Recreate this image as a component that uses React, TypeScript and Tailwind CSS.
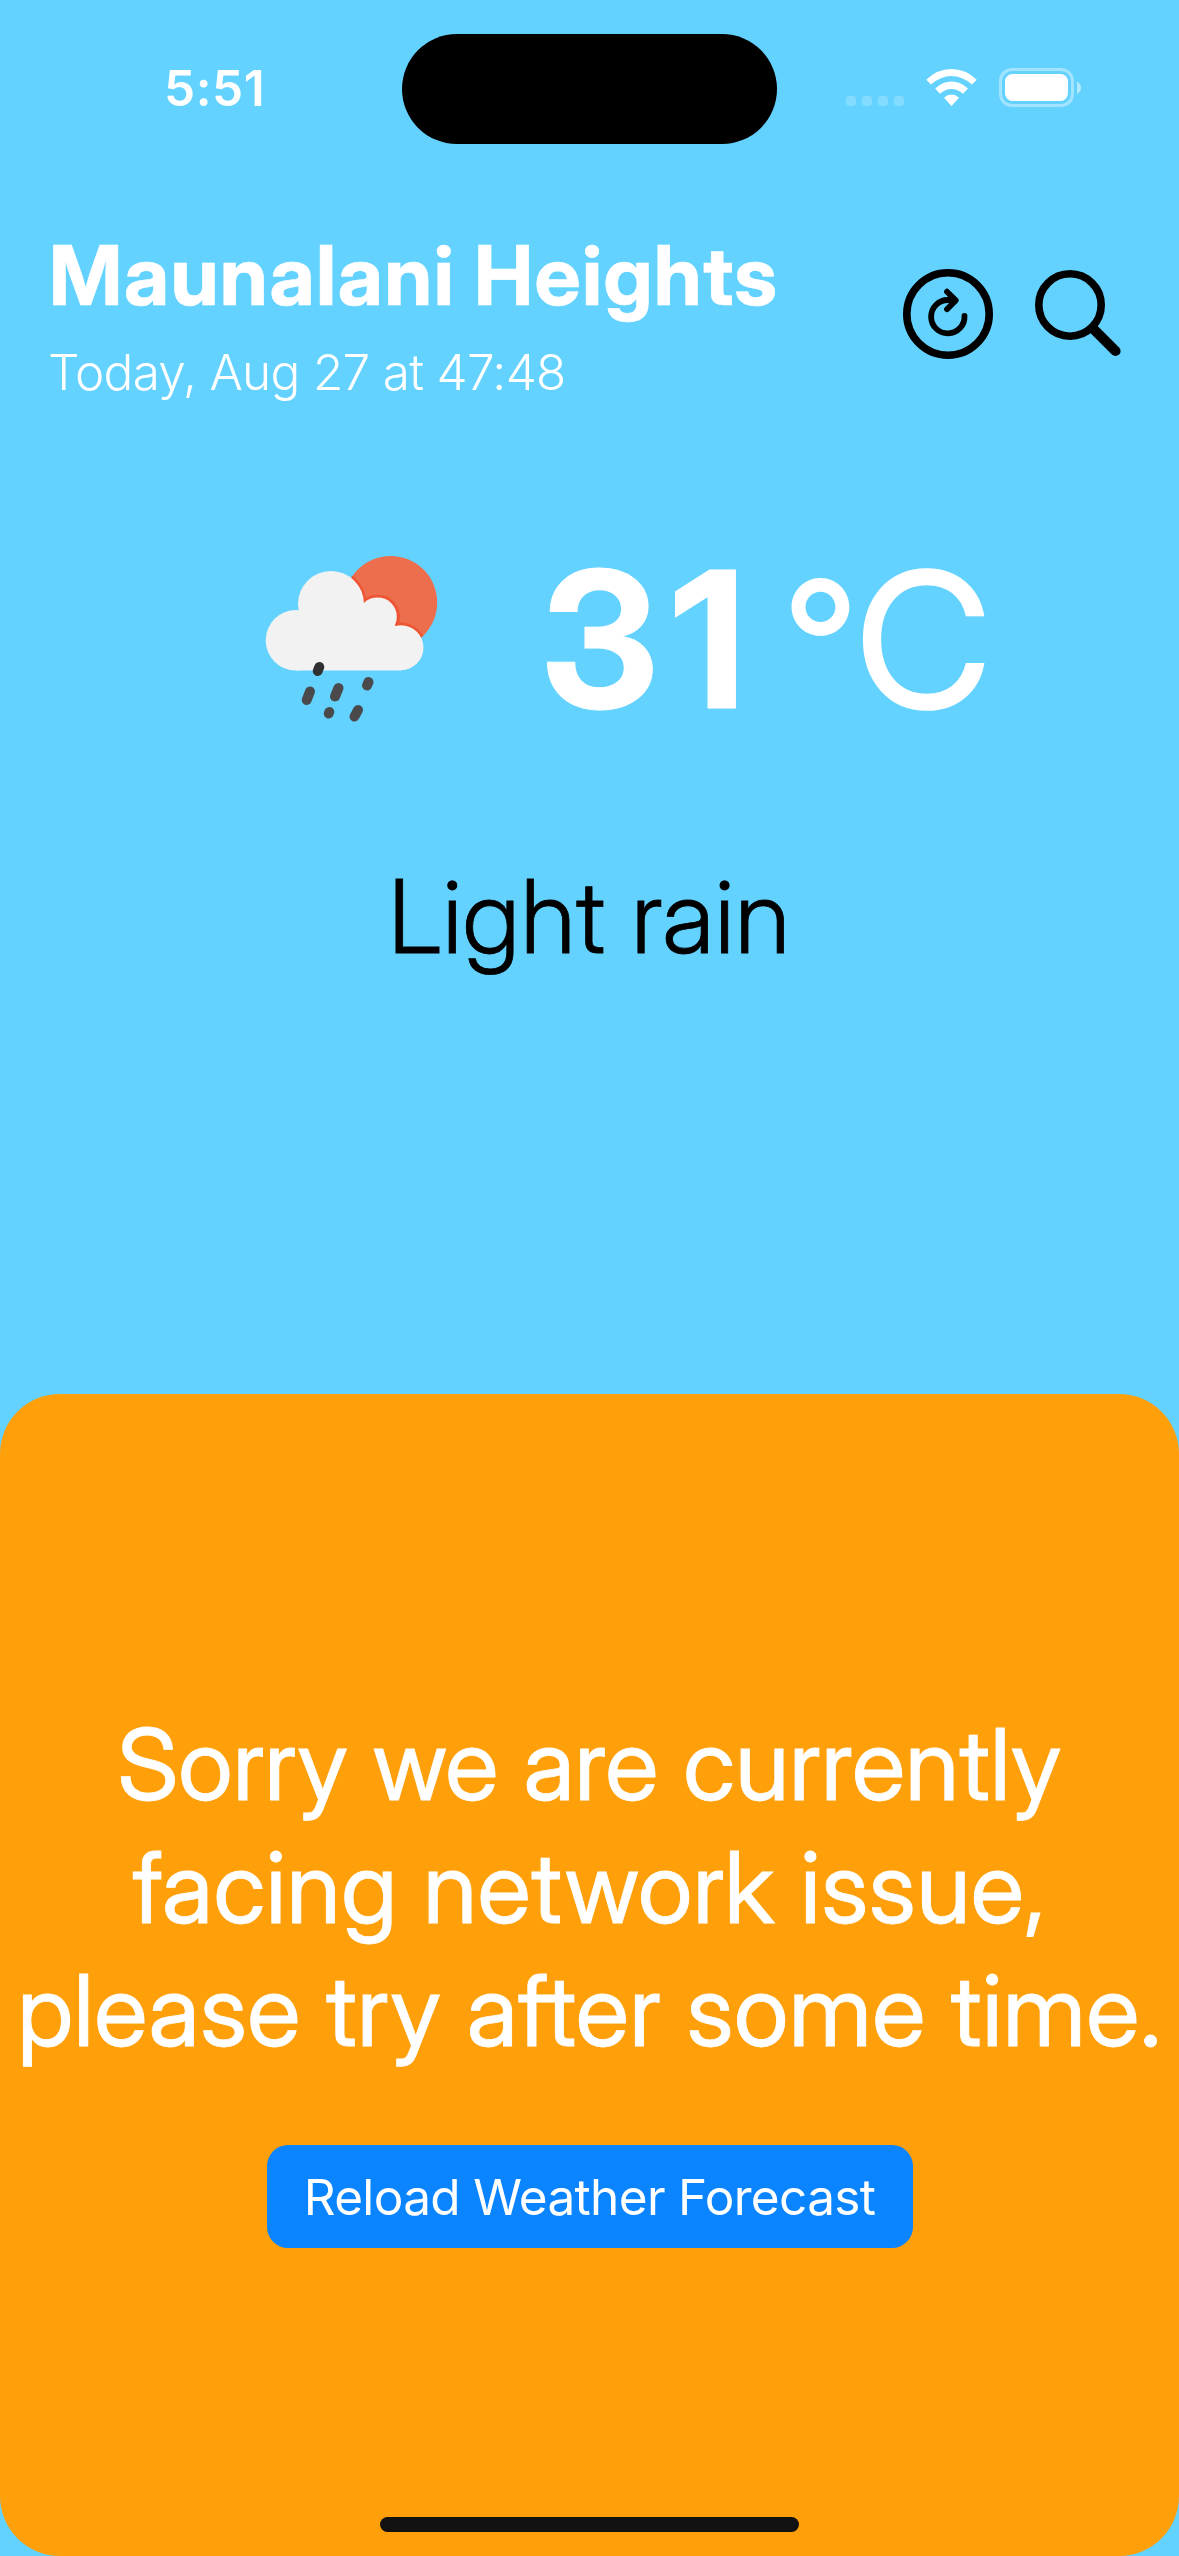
function StatusBar() {
  return (
    <div className="flex h-[178px] items-start justify-between">
      <div className="w-[402px] pl-[164px] pt-[58px] text-[49.5px] leading-[60px] font-semibold tracking-[0.6px] text-white">5:51</div>
      <div className="mt-[33.5px] h-[110.5px] w-[375px] rounded-full bg-black" />
      <div className="flex w-[402px] pl-[69px] pt-[64px]">
        <svg width="245" height="48" viewBox="846 64 245 48" fill="#fff">
          <g opacity="0.2">
            <rect x="846" y="96" width="10" height="10" rx="3" />
            <rect x="862" y="96" width="10" height="10" rx="3" />
            <rect x="878" y="96" width="10" height="10" rx="3" />
            <rect x="894" y="96" width="10" height="10" rx="3" />
          </g>
          <path d="M926.3 79.8 Q937.2 69 951.5 69 T976.7 79.8 L972 84.6 Q962.5 76 951.5 76 T931 84.6 Z" />
          <path d="M935.2 88.6 Q942.5 81.6 951.5 81.6 T968 88.6 L963 93.8 Q957.8 89 951.5 89 T940 93.8 Z" />
          <path d="M944 97.7 Q947.3 94.5 951.5 94.5 T959 97.7 L951.5 106 Z" />
          <rect x="1000.5" y="69.5" width="72" height="36" rx="11.5" fill="none" stroke="#fff" strokeWidth="3" opacity="0.4" />
          <rect x="1005" y="74" width="63" height="27" rx="7.5" />
          <path d="M1077 81.5 Q1081 83.5 1081 87.7 T1077 94 Z" opacity="0.5" />
        </svg>
      </div>
    </div>
  );
}

function RefreshIcon() {
  return (
    <svg width="90" height="90" viewBox="0 0 90 90" fill="none" stroke="#000" strokeLinecap="round" strokeLinejoin="round">
      <circle cx="45" cy="45" r="41.2" strokeWidth="7.6" />
      <path d="M61.5 47 A16.7 16.7 0 1 1 44.8 31 L51 31" strokeWidth="5.8" />
      <path d="M44 22.7 L52.7 31.4 L44 40.2" strokeWidth="5.8" />
    </svg>
  );
}

function SearchIcon() {
  return (
    <svg width="86" height="88" viewBox="0 0 86 88" fill="none" stroke="#000" strokeLinecap="round">
      <circle cx="35" cy="36" r="31.2" strokeWidth="7.6" />
      <path d="M59 60.5 L80.5 82" strokeWidth="10.2" />
    </svg>
  );
}

function RainIcon() {
  return (
    <svg width="180" height="180" viewBox="260 550 180 180">
      <clipPath id="sun">
        <circle cx="390.7" cy="602.5" r="46.5" />
      </clipPath>
      <g clipPath="url(#sun)">
        <rect x="340" y="550" width="100" height="100" fill="#ec6e4c" />
        <g fill="#ef5433">
          <circle cx="331" cy="604" r="35.5" />
          <circle cx="378" cy="616.7" r="22" />
          <circle cx="401" cy="647.5" r="25" />
        </g>
      </g>
      <g fill="#f2f2f2">
        <circle cx="331" cy="604" r="33" />
        <circle cx="377.5" cy="616.7" r="19.3" />
        <circle cx="401" cy="647.7" r="22.5" />
        <circle cx="296" cy="640.3" r="30.3" />
        <path d="M296 670.5 V612 L340 590 L388 620 L401 630 V670.5 Z" />
      </g>
      <g stroke="#4a4a4c" strokeWidth="10" strokeLinecap="round">
        <path d="M319.3 667 L317.7 671" stroke="#2f3032" />
        <path d="M310 691.5 L306.7 700" />
        <path d="M338.5 688 L335 696.5" />
        <path d="M368.5 682 L367 685.5" />
        <path d="M329.3 712 L328.7 713.5" />
        <path d="M358 710 L354.5 716.5" />
      </g>
    </svg>
  );
}

export default function App() {
  return (
    <div className="relative flex h-[2556px] w-[1179px] flex-col overflow-hidden bg-[#64d2ff] font-['Inter',sans-serif]">
      <StatusBar />
      <header className="flex items-start justify-between pl-12 pr-[58px]">
        <div className="pt-[48px] text-white">
          <h1 className="ml-px font-['Inter_Display','Inter',sans-serif] text-[82px] leading-[100px] font-bold tracking-[1.4px] whitespace-nowrap [-webkit-text-stroke:0.6px_white]">Maunalani Heights</h1>
          <p className="mt-[16px] text-[49.5px] leading-[60px] font-light tracking-[-0.7px] whitespace-nowrap">Today, Aug 27 at 47:48</p>
        </div>
        <div className="flex gap-[42px] pt-[91px]">
          <RefreshIcon />
          <SearchIcon />
        </div>
      </header>
      <section className="mt-[148px] flex h-[230px] pl-[260px] font-['Inter_Display','Inter',sans-serif] text-white">
        <RainIcon />
        <div className="mt-[-25px] ml-[101px] flex items-baseline leading-[230px]">
          <span className="text-[189px] font-bold tracking-[13.9px] [-webkit-text-stroke:1px_white]">31</span>
          <span className="relative top-[-3px] ml-6 text-[173px] font-medium">°</span>
          <span className="ml-[-2px] text-[188px] [-webkit-text-stroke:1.6px_white]">C</span>
        </div>
      </section>
      <p className="mt-[76px] text-center font-['Inter_Display','Inter',sans-serif] text-[101.5px] leading-[120px] font-light tracking-[1.05px] [-webkit-text-stroke:0.8px_black]">Light rain</p>
      <main className="absolute inset-x-0 bottom-0 flex h-[1162px] flex-col items-center rounded-[60px] bg-[#ff9f0a] pt-[309px] text-white">
        <div className="text-center font-['Inter_Display','Inter',sans-serif] text-[99px] leading-[123px] whitespace-nowrap [-webkit-text-stroke:0.8px_white]">
          <p>Sorry we are currently</p>
          <p className="tracking-[0.5px]">facing network issue,</p>
          <p className="tracking-[0.4px]">please try after some time.</p>
        </div>
        <button className="mt-[73px] h-[103px] w-[646px] rounded-[21px] bg-[#0a84ff] pt-px text-[49.5px] tracking-[-0.67px]">Reload Weather Forecast</button>
        <div className="absolute bottom-6 h-[15px] w-[419px] rounded-full bg-[#121212]" />
      </main>
    </div>
  );
}
